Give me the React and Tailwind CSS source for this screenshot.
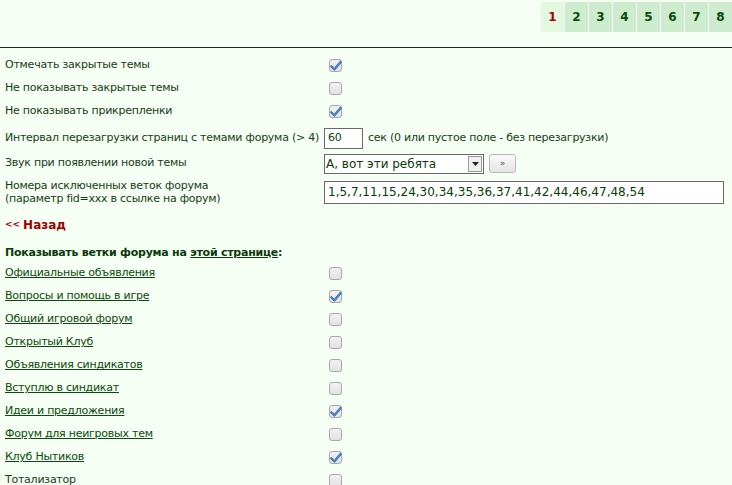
import React from "react";

const pages = ["1", "2", "3", "4", "5", "6", "7", "8"];

const settings = [
  { label: "Отмечать закрытые темы", checked: true },
  { label: "Не показывать закрытые темы", checked: false },
  { label: "Не показывать прикрепленки", checked: true },
];

const forums = [
  { name: "Официальные объявления", checked: false, link: true },
  { name: "Вопросы и помощь в игре", checked: true, link: true },
  { name: "Общий игровой форум", checked: false, link: true },
  { name: "Открытый Клуб", checked: false, link: true },
  { name: "Объявления синдикатов", checked: false, link: true },
  { name: "Вступлю в синдикат", checked: false, link: true },
  { name: "Идеи и предложения", checked: true, link: true },
  { name: "Форум для неигровых тем", checked: false, link: true },
  { name: "Клуб Нытиков", checked: true, link: true },
  { name: "Тотализатор", checked: false, link: false },
];

const Checkbox = ({ checked }) => (
  <svg width="15" height="15" viewBox="0 0 15 15" className="block">
    <defs>
      <linearGradient id="cbg" x1="0" y1="0" x2="0" y2="1">
        <stop offset="0" stopColor="#f2f2f2" />
        <stop offset="1" stopColor="#e2e2e2" />
      </linearGradient>
    </defs>
    <rect x="1.5" y="1.5" width="12" height="12" rx="2.5" fill="url(#cbg)" stroke="#a8a8a8" />
    {checked ? (
      <path
        d="M3.2 7.3 L6.3 10.2 L12.6 2.8 L13.2 4.6 L6.5 12.4 L2.6 8.8 Z"
        fill="#5b92dc"
        stroke="#2d62b0"
        strokeWidth="0.9"
        strokeLinejoin="round"
      />
    ) : null}
  </svg>
);

const Row = ({ left, children, className = "h-[23px]" }) => (
  <div className={`flex items-center ${className}`}>
    <div className="w-[324px] shrink-0 pl-[5px]">{left}</div>
    <div className="flex items-center">{children}</div>
  </div>
);

const App = () => {
  return (
    <div
      className="w-[732px] h-[485px] overflow-hidden bg-[#f5fff3] text-[11px] tracking-[-0.25px] text-[#153d15]"
      style={{ fontFamily: '"DejaVu Sans", sans-serif' }}
    >
      <div className="flex justify-end pt-[2px] h-[47px]">
        <div className="flex gap-px h-[30px] tracking-normal">
          {pages.map((p) => (
            <div
              key={p}
              className={`w-[23px] flex items-center justify-center font-bold text-[12px] ${
                p === "1" ? "bg-[#e3f9df] text-[#a00000]" : "bg-[#cdeccd] text-[#0a4a0a]"
              }`}
            >
              {p}
            </div>
          ))}
        </div>
      </div>
      <div className="h-px bg-[#0c2e0c]" />

      <div className="pt-[6px]">
        {settings.map((s) => (
          <Row key={s.label} left={s.label}>
            <div className="pl-[4px]">
              <Checkbox checked={s.checked} />
            </div>
          </Row>
        ))}

        <Row left="Интервал перезагрузки страниц с темами форума (> 4)" className="h-[29px] pt-[1px]">
          <div className="w-[39px] h-[21px] border border-[#6a6a6a] bg-white pl-[3px] flex items-center">60</div>
          <span className="ml-[5px]">сек (0 или пустое поле - без перезагрузки)</span>
        </Row>

        <Row left="Звук при появлении новой темы" className="h-[23px]">
          <div className="w-[160px] h-[20px] border border-[#6a6a6a] bg-white flex items-center tracking-normal">
            <span className="flex-1 pl-[1px] text-[12px] text-[#0a3a0a]">А, вот эти ребята</span>
            <div className="w-[14px] h-[16px] mr-[1px] border border-[#9a9a9a] bg-[#f0f0f0] flex items-center justify-center">
              <svg width="7" height="4" viewBox="0 0 7 4">
                <path d="M0 0 L7 0 L3.5 4 Z" fill="#222" />
              </svg>
            </div>
          </div>
          <div className="ml-[5px] w-[27px] h-[19px] border border-[#b8b8b8] rounded-[3px] bg-gradient-to-b from-[#fafafa] to-[#e4e4e4] flex items-center justify-center text-[9px] text-[#555]">
            »
          </div>
        </Row>

        <Row
          left={
            <div className="leading-[13px]">
              Номера исключенных веток форума
              <br />
              (параметр fid=xxx в ссылке на форум)
            </div>
          }
          className="h-[33px] pt-[1px]"
        >
          <div className="w-[400px] h-[23px] border border-[#6a6a6a] bg-white pl-[3px] flex items-center text-[12px] text-[#0a3a0a] tracking-normal">
            1,5,7,11,15,24,30,34,35,36,37,41,42,44,46,47,48,54
          </div>
        </Row>

        <div className="pl-[5px] h-[34px] flex items-center font-bold text-[#a00000] text-[12px] tracking-normal">
          <span className="text-[9px] mr-[3px]">&lt;&lt;</span>Назад
        </div>

        <div className="pl-[5px] pt-[2px] h-[20px] flex items-center font-bold text-[11px] text-[#0a3a0a]">
          Показывать ветки форума на&nbsp;<span className="underline">этой странице</span>:
        </div>

        {forums.map((f) => (
          <Row
            key={f.name}
            left={f.link ? <span className="underline text-[#0a4a0a]">{f.name}</span> : f.name}
          >
            <div className="pl-[4px]">
              <Checkbox checked={f.checked} />
            </div>
          </Row>
        ))}
      </div>
    </div>
  );
};

export default App;
